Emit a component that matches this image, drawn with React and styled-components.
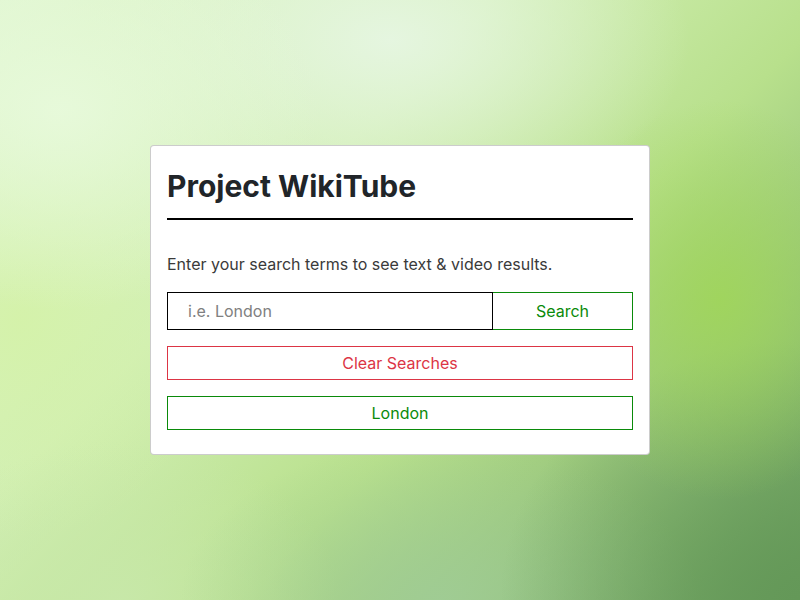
import React, { useState } from "react";
import styled, { createGlobalStyle } from "styled-components";

const GlobalStyle = createGlobalStyle`
  html, body {
    margin: 0;
    padding: 0;
  }
  body {
    font-family: Inter, "Noto Sans", "Liberation Sans", sans-serif;
  }
  * {
    box-sizing: border-box;
  }
`;

const Page = styled.div`
  width: 800px;
  height: 600px;
  display: flex;
  justify-content: center;
  padding-top: 145px;
  background:
    radial-gradient(ellipse 260px 200px at 60px 110px, rgba(232, 250, 220, 0.9), rgba(232, 250, 220, 0) 100%),
    radial-gradient(ellipse 300px 180px at 390px 40px, rgba(230, 246, 226, 0.95), rgba(230, 246, 226, 0) 100%),
    radial-gradient(ellipse 170px 200px at 720px 300px, rgba(160, 214, 88, 0.85), rgba(160, 214, 88, 0) 100%),
    radial-gradient(ellipse 300px 260px at 800px 600px, rgba(100, 152, 88, 1), rgba(100, 152, 88, 0) 100%),
    radial-gradient(ellipse 260px 160px at 440px 600px, rgba(160, 204, 150, 0.9), rgba(160, 204, 150, 0) 100%),
    radial-gradient(ellipse 220px 160px at 120px 600px, rgba(200, 232, 170, 0.9), rgba(200, 232, 170, 0) 100%),
    radial-gradient(ellipse 200px 220px at 20px 320px, rgba(212, 242, 168, 0.9), rgba(212, 242, 168, 0) 100%),
    linear-gradient(135deg, #e0f6d0 0%, #d2efb4 35%, #b8e08c 60%, #88b872 85%, #6a9e5e 100%);
`;

const Card = styled.div`
  width: 500px;
  height: 310px;
  background: #fff;
  border: 1px solid rgba(0, 0, 0, 0.2);
  border-radius: 4px;
  padding: 16px 16px;
  display: flex;
  flex-direction: column;
`;

const Title = styled.h1`
  margin: 4px 0 0;
  font-size: 30px;
  line-height: 40px;
  font-weight: 700;
  letter-spacing: 0;
  color: #212529;
`;

const Rule = styled.hr`
  margin: 12px 0 0;
  border: none;
  border-top: 2px solid #000;
  opacity: 1;
`;

const Lead = styled.p`
  margin: 33px 0 0;
  font-size: 16px;
  line-height: 22px;
  color: #3a3a3a;
`;

const SearchRow = styled.form`
  display: flex;
  margin-top: 17px;
  height: 38px;
`;

const SearchInput = styled.input`
  flex: 1;
  height: 100%;
  border: 1px solid #000;
  padding: 0 20px;
  font: inherit;
  font-size: 16px;
  color: #333;
  outline: none;
  &::placeholder {
    color: #808080;
  }
`;

const OutlineButton = styled.button`
  width: ${(props) => (props.$fixed ? "140px" : "100%")};
  height: ${(props) => (props.$fixed ? "100%" : "34px")};
  background: #fff;
  border: 1px solid ${(props) => props.$color};
  border-left-width: ${(props) => (props.$fixed ? "0" : "1px")};
  color: ${(props) => props.$color};
  font: inherit;
  font-size: 16px;
  cursor: pointer;
  padding: 0;
  margin-top: ${(props) => props.$top || "0"};
`;

const App = () => {
  const [term, setTerm] = useState("");
  return (
    <>
      <GlobalStyle />
      <Page>
        <Card>
          <Title>Project WikiTube</Title>
          <Rule />
          <Lead>Enter your search terms to see text &amp; video results.</Lead>
          <SearchRow onSubmit={(e) => e.preventDefault()}>
            <SearchInput
              placeholder="i.e. London"
              value={term}
              onChange={(e) => setTerm(e.target.value)}
            />
            <OutlineButton $fixed $color="#0a8a0a" type="submit">
              Search
            </OutlineButton>
          </SearchRow>
          <OutlineButton $color="#dc3545" $top="16px">
            Clear Searches
          </OutlineButton>
          <OutlineButton $color="#0a8a0a" $top="16px">
            London
          </OutlineButton>
        </Card>
      </Page>
    </>
  );
};

export default App;
